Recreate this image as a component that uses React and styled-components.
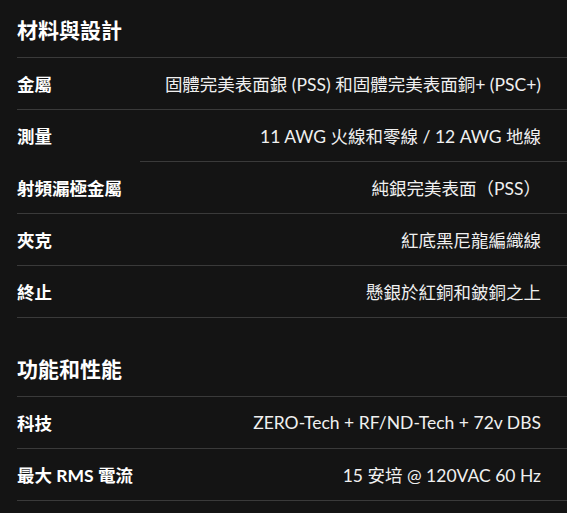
import React from "react";
import styled, { createGlobalStyle } from "styled-components";

const Global = createGlobalStyle`
  html, body { margin: 0; padding: 0; background: #141414; }
  body { font-family: Lato, "Noto Sans CJK TC", sans-serif; color: #f2f2f2; }
`;

const Page = styled.div`
  padding-left: 17px;
  background: #141414;
  min-height: 513px;
`;

const Section = styled.section`
  & + & { margin-top: 21px; }
`;

const Heading = styled.h2`
  margin: 0;
  height: 57px;
  display: flex;
  align-items: center;
  font-size: 21px;
  font-weight: 700;
  color: #ffffff;
  border-bottom: 1px solid #3a3a3a;
`;

const Row = styled.div`
  display: flex;
  align-items: center;
  justify-content: space-between;
  height: 51px;
  padding-right: 26px;
  ${({ $ruleStart }) =>
    $ruleStart
      ? `padding-bottom: 1px; background: linear-gradient(#3a3a3a, #3a3a3a) no-repeat right bottom / calc(100% - ${$ruleStart}px) 1px;`
      : `border-bottom: 1px solid #3a3a3a;`}
`;

const Label = styled.span`
  font-size: 17.5px;
  font-weight: 700;
  color: #ffffff;
  white-space: nowrap;
`;

const Value = styled.span`
  font-size: 17.5px;
  font-weight: 400;
  color: #f0f0f0;
  text-align: right;
  white-space: nowrap;
`;

const sections = [
  {
    title: "材料與設計",
    rows: [
      ["金屬", "固體完美表面銀 (PSS) 和固體完美表面銅+ (PSC+)"],
      ["測量", "11 AWG 火線和零線 / 12 AWG 地線", 123],
      ["射頻漏極金屬", "純銀完美表面（PSS）"],
      ["夾克", "紅底黑尼龍編織線"],
      ["終止", "懸銀於紅銅和鈹銅之上"],
    ],
  },
  {
    title: "功能和性能",
    rows: [
      ["科技", "ZERO-Tech + RF/ND-Tech + 72v DBS"],
      ["最大 RMS 電流", "15 安培 @ 120VAC 60 Hz"],
    ],
  },
];

export default function App() {
  return (
    <>
      <Global />
      <Page>
        {sections.map((s) => (
          <Section key={s.title}>
            <Heading>{s.title}</Heading>
            {s.rows.map(([l, v, rs]) => (
              <Row key={l} $ruleStart={rs}>
                <Label>{l}</Label>
                <Value>{v}</Value>
              </Row>
            ))}
          </Section>
        ))}
      </Page>
    </>
  );
}
